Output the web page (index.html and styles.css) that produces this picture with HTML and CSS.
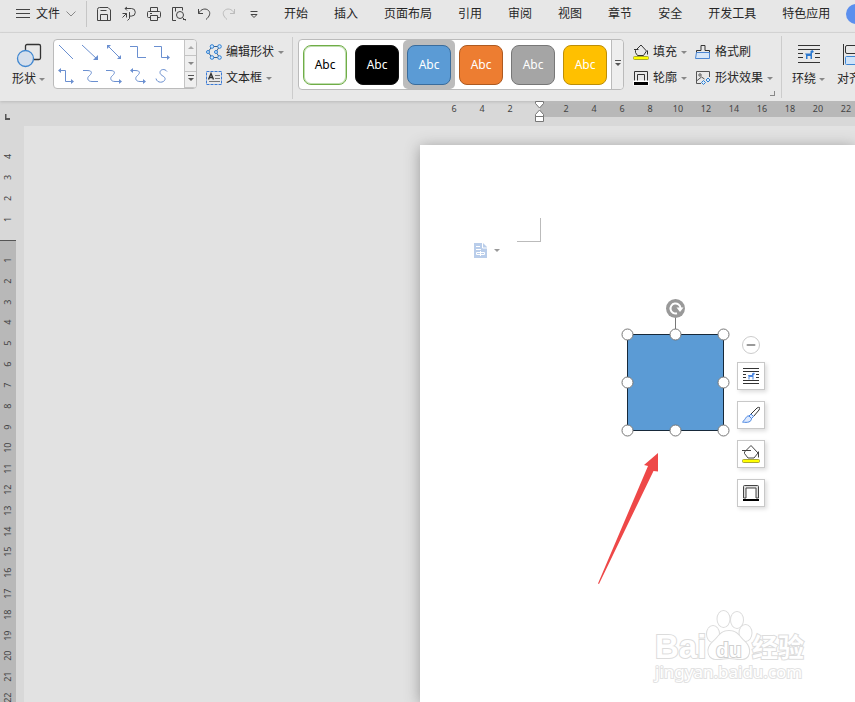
FILE: index.html
```html
<!DOCTYPE html>
<html lang="zh-CN">
<head>
<meta charset="utf-8">
<meta name="viewport" content="width=device-width, initial-scale=1">
<title>文档编辑器</title>
<link rel="stylesheet" href="styles.css">
</head>
<body>
<header class="menubar">
  <button class="file-menu">
    <svg width="14" height="11" viewBox="0 0 14 11"><path d="M0 1.5h14M0 5.5h14M0 9.5h14" stroke="#444"/></svg>
    <span>文件</span>
    <svg width="10" height="6" viewBox="0 0 10 6"><path d="M.5 .5L5 5L9.500 .5" fill="none" stroke="#888"/></svg>
  </button>
  <div class="quick">
    <button aria-label="保存"><svg width="16" height="16" viewBox="0 0 16 16"><path d="M3.500 1.500h8.500l2.500 2.500v10.500h-13v-11q0-2 2-2zM4.500 14.500v-6h7v6M4.500 4.500h6"/></svg></button>
    <button aria-label="输出"><svg width="16" height="16" viewBox="0 0 16 16"><path d="M4 2.500h6.500a3.800 3.800 0 0 1 0 7.600H8.500v-4M8.500 10v2.500l-2 2M1.500 7.500h4v4M5.500 7.500l-4 4M6 1L4 2.500l2 2"/></svg></button>
    <button aria-label="打印"><svg width="16" height="16" viewBox="0 0 16 16"><path d="M4.500 5.500v-4h7v4M4.500 11.500h-2q-1 0-1-1v-4q0-1 1-1h11q1 0 1 1v4q0 1-1 1h-2M4.500 9.500h7v5h-7zM4 7.500h2"/></svg></button>
    <button aria-label="打印预览"><svg width="16" height="16" viewBox="0 0 16 16"><path d="M5 14.500H1.500v-13h10v3M12 13.500h3M4.500 1.500v4M11.500 11.500l3 3"/><circle cx="9" cy="9" r="3.500"/></svg></button>
    <button aria-label="撤销"><svg width="16" height="16" viewBox="0 0 16 16"><path d="M2.500 3v4.500H7M2.500 7.500C5 2.500 10 2 12.500 4.500s1 6-2.500 9"/></svg></button>
    <button aria-label="恢复" class="off"><svg width="16" height="16" viewBox="0 0 16 16"><path d="M13.500 3v4.500H9M13.500 7.500C11 2.500 6 2 3.500 4.500s-1 6 2.500 9"/></svg></button>
    <button aria-label="更多"><svg width="16" height="16" viewBox="0 0 16 16"><path d="M4.500 5.500h7M5 8.500l3 3l3-3z"/></svg></button>
  </div>
  <nav class="tabs">
    <a href="#">开始</a><a href="#">插入</a><a href="#">页面布局</a><a href="#">引用</a><a href="#">审阅</a><a href="#">视图</a><a href="#">章节</a><a href="#">安全</a><a href="#">开发工具</a><a href="#">特色应用</a>
  </nav>
  <button class="avatar" aria-label="账户"></button>
</header>

<section class="ribbon">
  <button class="big shape-btn">
    <svg width="26" height="26" viewBox="0 0 26 26"><rect x="9.500" y="1.500" width="15" height="15" rx="1.500" fill="none" stroke="#333" stroke-width="1.300"/><circle cx="9.500" cy="15.500" r="8" fill="#d5dfec" stroke="#4087d0" stroke-width="1.300"/></svg>
    <span>形状<i class="caret"></i></span>
  </button>

  <div class="gallery">
    <div class="lines">
      <button aria-label="直线"><svg width="20" height="20" viewBox="0 0 20 20"><path d="M3 3l14 14"/></svg></button>
      <button aria-label="箭头"><svg width="20" height="20" viewBox="0 0 20 20"><path d="M2 3l15 14"/><path class="tip" d="M18 18h-5l5-5z"/></svg></button>
      <button aria-label="双箭头"><svg width="20" height="20" viewBox="0 0 20 20"><path d="M4 4l12 12"/><path class="tip" d="M3 3h4l-4 4zM17 17h-4l4-4z"/></svg></button>
      <button aria-label="肘形线"><svg width="20" height="20" viewBox="0 0 20 20"><path d="M2 4.500h7.500v11H18"/></svg></button>
      <button aria-label="肘形箭头"><svg width="20" height="20" viewBox="0 0 20 20"><path d="M2 4.500h7.500v11H16"/><path class="tip" d="M15 13l3 2.500l-3 2.500z"/></svg></button>
      <button aria-label="肘形双箭头"><svg width="20" height="20" viewBox="0 0 20 20"><path d="M4 4.500h5.500v11H16"/><path class="tip" d="M15 13l3 2.500l-3 2.500zM5 2L2 4.500L5 7z"/></svg></button>
      <button aria-label="曲线"><svg width="20" height="20" viewBox="0 0 20 20"><path d="M3 4.500h4c7 0 4 4 2 5.500s-2 5.500 3 5.500h6"/></svg></button>
      <button aria-label="曲线箭头"><svg width="20" height="20" viewBox="0 0 20 20"><path d="M2 4.500h4c7 0 4 4 2 5.500s-2 5.500 3 5.500h5"/><path class="tip" d="M15 13l3 2.500l-3 2.500z"/></svg></button>
      <button aria-label="曲线双箭头"><svg width="20" height="20" viewBox="0 0 20 20"><path d="M4 4.500h3c7 0 4 4 2 5.500s-2 5.500 3 5.500h4"/><path class="tip" d="M15 13l3 2.500l-3 2.500zM5 2L2 4.500L5 7z"/></svg></button>
      <button aria-label="自由曲线"><svg width="20" height="20" viewBox="0 0 20 20"><path d="M15 5.500C13 2.500 8 3 8 6.500s6 3.500 5 7c-1 3.500-8 4-9-1"/></svg></button>
    </div>
    <div class="scroller">
      <button aria-label="向上" disabled><i class="caret up"></i></button>
      <button aria-label="向下"><i class="caret"></i></button>
      <button aria-label="展开"><i class="caret bar"></i></button>
    </div>
  </div>

  <div class="rows">
    <button class="row">
      <svg width="16" height="16" viewBox="0 0 16 16"><path d="M6 2.500h7.500L10 8l3.500 5.500H6L2 8z" fill="none" stroke="#3c5f86"/><g fill="#cfe6fc" stroke="#2d7fd3"><circle cx="6" cy="2.500" r="1.800"/><circle cx="13.500" cy="2.500" r="1.800"/><circle cx="2" cy="8" r="1.500"/><circle cx="10" cy="8" r="1.500"/><circle cx="6" cy="13.500" r="1.800"/><circle cx="13.500" cy="13.500" r="1.800"/></g></svg>
      <span>编辑形状</span><i class="caret"></i>
    </button>
    <button class="row">
      <svg width="16" height="16" viewBox="0 0 16 16"><rect x=".5" y="1.500" width="15" height="13" fill="none" stroke="#3b7bd6" stroke-dasharray="3 1"/><path d="M2.500 9.500l2.500-6l2.500 6M3.500 7.500h3" fill="none" stroke="#333" stroke-width="1.400"/><path d="M9 5.500h5M9 8.500h5M3 11.500h11" stroke="#777"/></svg>
      <span>文本框</span><i class="caret"></i>
    </button>
  </div>

  <div class="styles">
    <div class="cell"><button class="swatch outline">Abc</button></div>
    <div class="cell"><button class="swatch black">Abc</button></div>
    <div class="cell selected"><button class="swatch blue">Abc</button></div>
    <div class="cell"><button class="swatch orange">Abc</button></div>
    <div class="cell"><button class="swatch grey">Abc</button></div>
    <div class="cell"><button class="swatch yellow">Abc</button></div>
    <button class="expand" aria-label="更多样式"><i class="caret bar"></i></button>
  </div>

  <div class="rows">
    <button class="row">
      <svg width="16" height="18" viewBox="0 0 16 18"><path d="M2.500 7.500L8 2l5.500 6L10.500 12.500h-6L2.500 9.500zM1 6.500h4.500M14.500 7.500v4" fill="none" stroke="#333"/><rect x=".5" y="13.500" width="15" height="3" rx="1" fill="#ff0" stroke="#aaa832"/></svg>
      <span>填充</span><i class="caret"></i>
    </button>
    <button class="row">
      <svg width="16" height="16" viewBox="0 0 16 16"><path d="M1.500 11V1.500h13V11M4.500 11V4.500h7V11" fill="none" stroke="#333"/><path d="M0 10.500h16v5H0z" fill="#fff"/><path d="M1 12h14v3H1z"/></svg>
      <span>轮廓</span><i class="caret"></i>
    </button>
  </div>

  <div class="rows effects">
    <button class="row">
      <svg width="16" height="16" viewBox="0 0 16 16"><path d="M1.500 9V6.500H6V1.500h4v5h4.500V9" fill="none" stroke="#333"/><path d="M1.500 8.500h13v6H.5z" fill="#d6e6f8" stroke="#4b86d3"/></svg>
      <span>格式刷</span>
    </button>
    <button class="row">
      <svg width="16" height="16" viewBox="0 0 16 16"><path d="M6 13.500H1.500v-12h13V7M1.500 11l5-4l3 2" fill="none" stroke="#555"/><circle cx="5" cy="5" r="1.200" fill="none" stroke="#555"/><path d="M8.500 10.500l2 2l-2 2l-2-2zM13 8l2 2l-2 2l-2-2z" fill="#d9eafa" stroke="#2d7fd3"/></svg>
      <span>形状效果</span><i class="caret"></i>
    </button>
    <i class="launcher"></i>
  </div>

  <div class="arrange">
    <button class="big">
      <svg width="22" height="24" viewBox="0 0 22 24"><path d="M0 2.500h22M0 6.500h22M0 10.500h5M0 14.500h5M17 10.500h5M17 14.500h5M0 19.500h22" stroke="#333"/><path d="M7 10.500h5.500V8l2-1l1.500 2l-2 1v6h-1.500v-3H9.500v3H8v-4z" fill="#2c79cf"/></svg>
      <span>环绕<i class="caret"></i></span>
    </button>
    <button class="big">
      <svg width="24" height="24" viewBox="0 0 24 24"><path d="M1.500 1v21" stroke="#333"/><rect x="3.500" y="2.500" width="12" height="8" rx="1.500" fill="none" stroke="#333"/><rect x="3.500" y="13.500" width="18" height="8" rx="1" fill="#cfe3f8" stroke="#3d86d6"/></svg>
      <span>对齐<i class="caret"></i></span>
    </button>
  </div>
</section>

<div class="hruler">
  <svg class="tabstop" width="6" height="6" viewBox="0 0 6 6"><path d="M.5 0v6M0 5h5" stroke="#555" stroke-width="2" fill="none"/></svg>
  <div class="before"><span>6</span><span>4</span><span>2</span></div>
  <div class="after"><span>2</span><span>4</span><span>6</span><span>8</span><span>10</span><span>12</span><span>14</span><span>16</span><span>18</span><span>20</span><span>22</span></div>
  <svg class="indent" width="10" height="22" viewBox="0 0 10 22"><path d="M.5 .5h8v2L4.500 7L.5 2.500zM4.500 9l4 4.500v2h-8v-2zM.5 15.500h8v5h-8z" fill="#fff" stroke="#777"/></svg>
</div>

<main class="work">
  <div class="vruler">
    <div class="above"><span>4</span><span>3</span><span>2</span><span>1</span></div>
    <div class="below"><span>1</span><span>2</span><span>3</span><span>4</span><span>5</span><span>6</span><span>7</span><span>8</span><span>9</span><span>10</span><span>11</span><span>12</span><span>13</span><span>14</span><span>15</span><span>16</span><span>17</span><span>18</span><span>19</span><span>20</span><span>21</span><span>22</span></div>
  </div>
  <div class="canvas">
    <article class="page">
      <button class="paste" aria-label="段落布局">
        <svg width="13" height="15" viewBox="0 0 13 15"><path d="M0 0h9l4 4v11H0z" fill="#b9cdea"/><path d="M8.500 0v5H13M2 3.500h4M2 6.500h5M2.500 9.500h8v2h-8zM6.500 8v5" stroke="#fff" fill="none"/></svg>
        <i class="caret"></i>
      </button>
      <i class="crop"></i>

      <svg class="drawing" width="120" height="150" viewBox="0 0 120 150">
        <path d="M60.500 18v18" stroke="#777"/>
        <circle cx="60.500" cy="13.500" r="9.500" fill="#999"/>
        <path d="M62 18.300A5 5 0 1 1 65.500 13" fill="none" stroke="#fff" stroke-width="2"/>
        <path d="M61.500 12.500h7l-3.500 4.500z" fill="#fff"/>
        <rect x="12.500" y="39.500" width="96" height="96" fill="#5b9bd5" stroke="#17293a"/>
        <g fill="#fff" stroke="#777"><circle cx="12.500" cy="39.500" r="5.500"/><circle cx="60.500" cy="39.500" r="5.500"/><circle cx="108.500" cy="39.500" r="5.500"/><circle cx="12.500" cy="87.500" r="5.500"/><circle cx="108.500" cy="87.500" r="5.500"/><circle cx="12.500" cy="135.500" r="5.500"/><circle cx="60.500" cy="135.500" r="5.500"/><circle cx="108.500" cy="135.500" r="5.500"/></g>
      </svg>

      <div class="float-tools">
        <button class="collapse" aria-label="收起"><svg width="18" height="18" viewBox="0 0 18 18"><circle cx="9" cy="9" r="8.500" fill="#fff" stroke="#ccc"/><path d="M5.500 9h7" stroke="#999" stroke-width="2" stroke-linecap="round"/></svg></button>
        <button class="tool" aria-label="布局选项"><svg width="18" height="18" viewBox="0 0 18 18"><path d="M1 1.500h16M1 4.500h16M1 7.500h3M1 10.500h3M14 7.500h3M14 10.500h3M1 13.500h16M1 16.500h16" stroke="#333"/><path d="M6 8h4V6.500L12 5.500l1 1.500l-1.500 1v4.500h-1V10H7.500v2.500h-1V9.500z" fill="#4b86e0"/></svg></button>
        <button class="tool" aria-label="形状样式"><svg width="18" height="18" viewBox="0 0 18 18"><path d="M9 8l6-6q1.500-1 2.500-.5q.5 1-.5 2.500l-5.500 6.500" fill="none" stroke="#333"/><path d="M9 8l2.500 2.500l-2 2L7 10zM7 10c-3-.5-3 3-6.500 6c5 1 9 0 9-3.500z" fill="#dce9ff" stroke="#4b86e0"/></svg></button>
        <button class="tool" aria-label="形状填充"><svg width="18" height="18" viewBox="0 0 18 18"><path d="M0 5.500h9M2.500 7L9 .5L16 8l-4 5H6L2.500 8.500zM16.500 6.500v6" fill="none" stroke="#444"/><rect x=".5" y="14.500" width="17" height="3" rx="1" fill="#ff0" stroke="#aaa832"/></svg></button>
        <button class="tool" aria-label="形状轮廓"><svg width="18" height="18" viewBox="0 0 18 18"><path d="M1.500 14V2.500q0-1 1-1h13q1 0 1 1V14H14V4H4v10z" fill="#ddd" stroke="#444"/><path d="M1 15h16v2H1z"/></svg></button>
      </div>

      <svg class="arrow" width="62" height="134" viewBox="0 0 62 134"><path d="M60 1L46 13l4 1L0 131.500l1 .5L55.500 19l4.500 .5z" fill="#ee4848"/></svg>

      <svg class="watermark" width="170" height="86" viewBox="0 0 170 86">
        <g class="wm">
          <text class="wm-latin" x="5" y="53" font-size="33">Bai</text>
          <ellipse cx="63" cy="29" rx="6" ry="8"/><ellipse cx="73.500" cy="14" rx="6" ry="8"/><ellipse cx="87" cy="15" rx="6" ry="8"/><ellipse cx="95.500" cy="28" rx="6" ry="8"/>
          <path d="M79 26C70 26 69 32 63 37c-8 7-5 18 5 17c4 0 7-1 11-1s7 1 11 1c10 1 12-10 5-17c-6-5-7-11-16-11z"/>
          <text class="wm-latin wm-du" x="66" y="52" font-size="21">du</text>
          <text class="wm-cjk" x="102" y="52" font-size="26">经验</text>
          <text class="wm-url" x="5" y="73" font-size="17">jingyan.baidu.com</text>
        </g>
      </svg>
    </article>
  </div>
</main>
</body>
</html>
```
FILE: styles.css
```css
* { box-sizing: border-box; }

body {
  margin: 0;
  height: 100vh;
  display: flex;
  flex-direction: column;
  overflow: hidden;
  background: #e7e7e7;
  color: #262626;
  font: 12px/16px "Noto Sans", "Noto Sans CJK SC", sans-serif;
}

button {
  margin: 0;
  padding: 0;
  border: 0;
  background: none;
  color: inherit;
  font: inherit;
  display: flex;
  align-items: center;
  justify-content: center;
}

svg { display: block; flex: none; }

.caret {
  display: inline-block;
  flex: none;
  width: 0;
  height: 0;
  border: 3px solid transparent;
  border-top-color: #888;
  border-bottom: 0;
}
.caret.up { border-top: 0; border-bottom: 3px solid #aaa; }
.caret.bar { position: relative; border-top-color: #555; }
.caret.bar::before {
  content: "";
  position: absolute;
  left: -3px;
  top: -6px;
  width: 6px;
  height: 1px;
  background: #555;
}

/* Menu bar */
.menubar {
  display: flex;
  align-items: center;
  flex: none;
  height: 33px;
  padding-bottom: 5px;
  border-bottom: 1px solid #d6d6d6;
  white-space: nowrap;
}
.file-menu {
  flex: none;
  height: 26px;
  gap: 6px;
  padding: 0 10px 0 16px;
  border-right: 1px solid #c6c6c6;
}
.quick { display: flex; flex: none; gap: 9px; padding: 0 22px 0 9px; }
.quick path, .quick circle { fill: none; stroke: #444; }
.quick .off path { stroke: #bbb; }
.tabs { display: flex; flex: none; gap: 26px; }
.tabs a { color: inherit; text-decoration: none; }
.avatar {
  flex: none;
  width: 20px;
  height: 20px;
  margin-left: 16px;
  border-radius: 50%;
  background: #5b8fee;
}

/* Ribbon */
.ribbon {
  position: relative;
  z-index: 1;
  display: flex;
  align-items: flex-start;
  flex: none;
  height: 68px;
  padding: 6px 0 0 12px;
  background: #e8e8e8;
  box-shadow: 0 1px 3px #bbb;
  white-space: nowrap;
}
.big { flex: none; flex-direction: column; gap: 4px; padding-top: 4px; }
.big .caret { margin-left: 3px; vertical-align: middle; }
.gallery {
  display: flex;
  flex: none;
  width: 144px;
  height: 50px;
  margin-left: 8px;
  border: 1px solid #bbb;
  border-radius: 4px;
  background: #fff;
  overflow: hidden;
}
.shape-btn { gap: 2px; }
.lines { display: grid; grid-template-columns: repeat(5, 24px); flex: 1; }
.lines path { fill: none; stroke: #6a8fd0; }
.lines .tip { fill: #6a8fd0; stroke: none; }
.scroller { display: grid; grid-template-rows: repeat(3, 1fr); width: 12px; }
.scroller button {
  border-left: 1px solid #c4c4c4;
  border-bottom: 1px solid #c4c4c4;
  background: #efefef;
}
.rows {
  position: relative;
  display: flex;
  flex: none;
  flex-direction: column;
  align-items: flex-start;
  gap: 10px;
  padding: 5px 0 0 9px;
}
.effects { padding-left: 8px; }
.row { height: 16px; gap: 4px; }
.launcher {
  position: absolute;
  right: -2px;
  bottom: -10px;
  width: 5px;
  height: 5px;
  border: solid #888;
  border-width: 0 1px 1px 0;
}

.styles {
  position: relative;
  display: flex;
  flex: none;
  height: 51px;
  margin-left: 14px;
  border: 1px solid #bbb;
  border-radius: 4px;
  background: #fff;
}
.styles::before, .arrange::before {
  content: "";
  position: absolute;
  left: -7px;
  top: -3px;
  width: 1px;
  height: 62px;
  background: #ccc;
}
.cell {
  display: grid;
  place-items: center;
  width: 52px;
  border-radius: 5px;
}
.cell.selected { background: #bcbcbc; }
.swatch {
  width: 44px;
  height: 40px;
  border: 1px solid;
  border-radius: 8px;
  color: #fff;
}
.outline { border-color: #70ad47; box-shadow: inset 0 0 0 1px #c0deb0; color: #000; }
.black { background: #000; border-color: #111; }
.blue { background: #5b9bd5; border-color: #3a6c9c; }
.orange { background: #ed7d31; border-color: #ad5a21; }
.grey { background: #a5a5a5; border-color: #777; }
.yellow { background: #ffc000; border-color: #bc8e08; }
.expand {
  width: 12px;
  border-left: 1px solid #bbb;
  border-radius: 0 4px 4px 0;
  background: #eee;
}

.arrange { position: relative; display: flex; flex: none; gap: 12px; margin-left: 19px; }
.arrange::before { left: -11px; }

/* Rulers */
.hruler {
  position: relative;
  display: flex;
  flex: none;
  height: 25px;
  background: #d8d8d8;
  color: #444;
  font-size: 9px;
  line-height: 16px;
  text-align: center;
}
.tabstop { margin: 13px 0 0 5px; }
.before { display: flex; flex: none; margin-left: 429px; width: 100px; }
.before span { width: 28px; }
.after {
  display: flex;
  flex: 1;
  min-width: 0;
  height: 16px;
  padding-left: 12px;
  background: #b8b8b8;
}
.after span { flex: none; width: 28px; }
.indent { position: absolute; left: 535px; top: 0; z-index: 2; }

.work { display: flex; flex: 1; min-height: 0; }
.vruler {
  display: flex;
  flex: none;
  flex-direction: column;
  width: 24px;
  background: #d8d8d8;
  color: #444;
  font-size: 9px;
}
.vruler div { display: flex; flex-direction: column; width: 16px; }
.vruler span {
  writing-mode: vertical-rl;
  transform: rotate(180deg);
  line-height: 16px;
  text-align: center;
}
.above { flex: none; padding: 20px 0 10px; }
.above span { height: 21px; }
.below {
  flex: 1;
  min-height: 0;
  margin-bottom: -6px;
  padding-top: 9px;
  border-top: 1px solid #555;
  background: #b8b8b8;
}
.below span { flex: 1; min-height: 0; }

/* Document area */
.canvas {
  display: flex;
  flex: 1;
  min-width: 0;
  padding: 19px 0 0 396px;
  background: #e2e2e2;
  overflow: hidden;
}
.page {
  position: relative;
  flex: 1;
  background: #fff;
  box-shadow: 0 2px 14px #999;
}
.paste { position: absolute; left: 54px; top: 98px; gap: 7px; }
.paste .caret { border-top-color: #999; }
.crop {
  position: absolute;
  left: 97px;
  top: 73px;
  width: 24px;
  height: 24px;
  border: solid #bbb;
  border-width: 0 1px 1px 0;
}
.drawing { position: absolute; left: 195px; top: 150px; }
.float-tools {
  position: absolute;
  left: 317px;
  top: 191px;
  display: flex;
  flex-direction: column;
  align-items: center;
  gap: 11px;
}
.collapse { margin-bottom: -3px; }
.tool {
  width: 28px;
  height: 28px;
  border: 1px solid #c8c8c8;
  background: #fff;
  box-shadow: 2px 2px 4px #ddd;
}
.arrow { position: absolute; left: 178px; top: 307px; }
.watermark { position: absolute; left: 230px; top: 460px; }
.wm { fill: #fff; stroke: #dcdcdc; stroke-width: 2px; paint-order: stroke; }
.wm-latin { font-family: "Liberation Sans", sans-serif; font-weight: 700; }
.wm-du { stroke: #d0d0d0; }
.wm-cjk { font-family: "Noto Sans CJK SC", sans-serif; font-weight: 700; }
.wm-url { font-family: "Noto Sans", sans-serif; stroke: #e2e2e2; }
```
